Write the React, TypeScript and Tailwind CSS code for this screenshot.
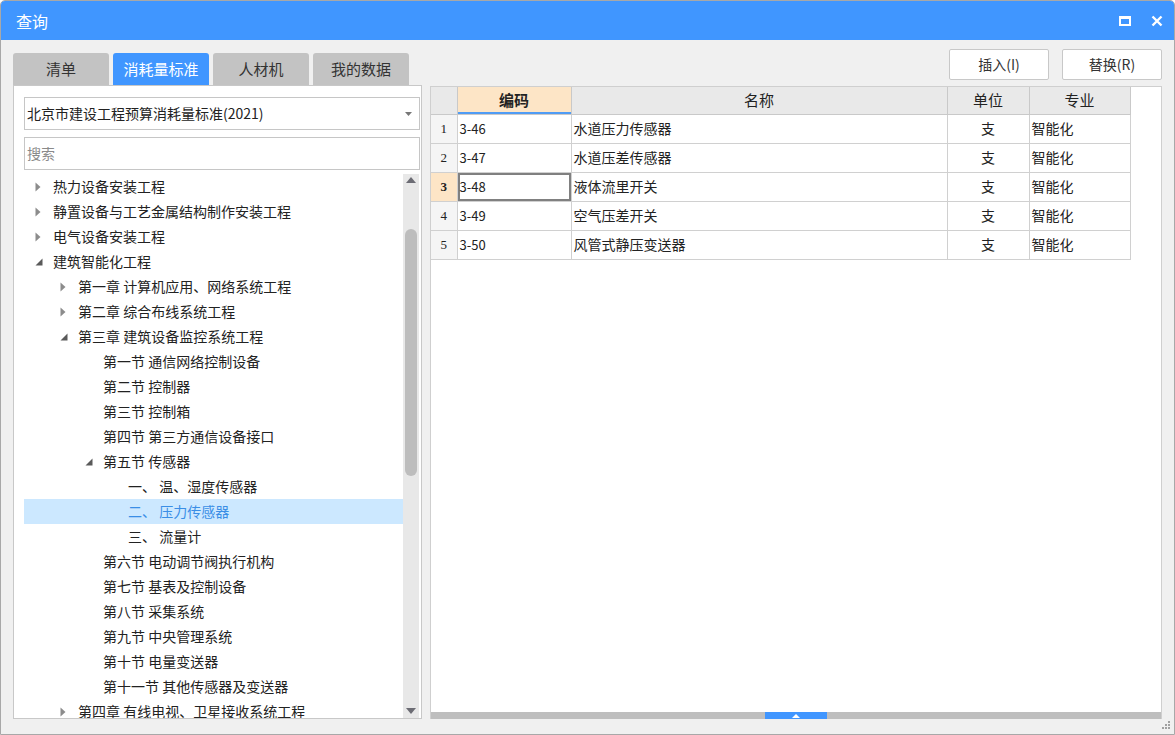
import React from 'react';

type Node = { text: string; level: number; state?: 'open' | 'closed'; selected?: boolean };

const tree: Node[] = [
  { text: '热力设备安装工程', level: 0, state: 'closed' },
  { text: '静置设备与工艺金属结构制作安装工程', level: 0, state: 'closed' },
  { text: '电气设备安装工程', level: 0, state: 'closed' },
  { text: '建筑智能化工程', level: 0, state: 'open' },
  { text: '第一章 计算机应用、网络系统工程', level: 1, state: 'closed' },
  { text: '第二章 综合布线系统工程', level: 1, state: 'closed' },
  { text: '第三章 建筑设备监控系统工程', level: 1, state: 'open' },
  { text: '第一节 通信网络控制设备', level: 2 },
  { text: '第二节 控制器', level: 2 },
  { text: '第三节 控制箱', level: 2 },
  { text: '第四节 第三方通信设备接口', level: 2 },
  { text: '第五节 传感器', level: 2, state: 'open' },
  { text: '一、 温、湿度传感器', level: 3 },
  { text: '二、 压力传感器', level: 3, selected: true },
  { text: '三、 流量计', level: 3 },
  { text: '第六节 电动调节阀执行机构', level: 2 },
  { text: '第七节 基表及控制设备', level: 2 },
  { text: '第八节 采集系统', level: 2 },
  { text: '第九节 中央管理系统', level: 2 },
  { text: '第十节 电量变送器', level: 2 },
  { text: '第十一节 其他传感器及变送器', level: 2 },
  { text: '第四章 有线电视、卫星接收系统工程', level: 1, state: 'closed' },
];

const rows = [
  { code: '3-46', name: '水道压力传感器' },
  { code: '3-47', name: '水道压差传感器' },
  { code: '3-48', name: '液体流里开关' },
  { code: '3-49', name: '空气压差开关' },
  { code: '3-50', name: '风管式静压变送器' },
];

const tabs = ['清单', '消耗量标准', '人材机', '我的数据'];

function Arrow({ state }: { state?: 'open' | 'closed' }) {
  if (state === 'closed')
    return (
      <svg width="6" height="10" viewBox="0 0 6 10">
        <path d="M0.5 0.5 L5.5 5 L0.5 9.5 Z" fill="#8c8c8c" />
      </svg>
    );
  if (state === 'open')
    return (
      <svg width="8" height="8" viewBox="0 0 8 8">
        <path d="M7.5 0.5 L7.5 7.5 L0.5 7.5 Z" fill="#5a5a5a" />
      </svg>
    );
  return null;
}

export default function App() {
  return (
    <div className="w-[1175px] h-[735px] flex flex-col bg-[#f0f0f0] border border-[#a8a8a8] rounded-t-[5px] overflow-hidden font-['Noto_Sans_CJK_SC','Noto_Sans',sans-serif] text-[#222]">
      {/* title bar */}
      <div className="h-[39px] shrink-0 bg-[#4096ff] flex items-center justify-between pl-[15px] pr-[11px]">
        <span className="text-white text-[16px]">查询</span>
        <div className="flex items-center gap-[20px]">
          <div className="w-[12px] h-[10px] border-2 border-t-[3px] border-white" />
          <svg width="12" height="12" viewBox="0 0 12 12">
            <path d="M1.5 1.5 L10.5 10.5 M10.5 1.5 L1.5 10.5" stroke="white" strokeWidth="2.4" />
          </svg>
        </div>
      </div>

      {/* body */}
      <div className="flex-1 flex pl-[12px] pr-[12px] pt-[9px] pb-[15px] min-h-0">
        {/* left column */}
        <div className="w-[409px] flex flex-col mt-[4px]">
          <div className="h-[32px] flex gap-[4px]">
            {tabs.map((t, i) => (
              <div
                key={t}
                className={
                  i === 1
                    ? 'w-[96px] rounded-t-[3px] bg-[#4096ff] text-white text-[15px] flex items-center justify-center'
                    : 'w-[96px] rounded-t-[3px] bg-[#c3c3c3] text-[#333] text-[15px] flex items-center justify-center'
                }
              >
                {t}
              </div>
            ))}
          </div>
          <div className="flex-1 flex flex-col bg-white border border-[#c8c8c8] pl-[10px] pr-[1px] pt-[11px] min-h-0">
            <div className="h-[33px] border border-[#c6c6c6] flex items-center justify-between pl-[2px] pr-[7px] text-[14px]">
              <span>北京市建设工程预算消耗量标准(2021)</span>
              <svg width="7" height="4" viewBox="0 0 7 4">
                <path d="M0 0 L7 0 L3.5 4 Z" fill="#777" />
              </svg>
            </div>
            <div className="h-[33px] mt-[7px] border border-[#c6c6c6] flex items-center pl-[2px] text-[14px] text-[#8a8a8a]">
              搜索
            </div>
            <div className="flex-1 flex mt-[4px] min-h-0">
              <div className="flex-1 overflow-hidden">
                {tree.map((n, i) => (
                  <div
                    key={i}
                    className={
                      n.selected
                        ? 'h-[25px] flex items-center bg-[#cce8ff] text-[#3a8ee6] text-[14px] whitespace-nowrap'
                        : 'h-[25px] flex items-center text-[14px] whitespace-nowrap'
                    }
                    style={{ paddingLeft: 8 + n.level * 25 }}
                  >
                    <div className="w-[21px] flex items-center pl-[3px]">
                      <Arrow state={n.state} />
                    </div>
                    <span>{n.text}</span>
                  </div>
                ))}
              </div>
              <div className="w-[16px] bg-[#e8e8e8] flex flex-col items-center mr-[1px]">
                <svg width="10" height="6" viewBox="0 0 10 6" className="mt-[3px]">
                  <path d="M0 6 L5 0 L10 6 Z" fill="#6c6c74" />
                </svg>
                <div className="w-[12px] h-[247px] mt-[46px] rounded-t-[6px] rounded-b-[6px] bg-[#bdbdbd]" />
                <div className="flex-1" />
                <svg width="10" height="6" viewBox="0 0 10 6" className="mb-[4px]">
                  <path d="M0 0 L10 0 L5 6 Z" fill="#6c6c74" />
                </svg>
              </div>
            </div>
          </div>
        </div>

        {/* right column */}
        <div className="flex-1 flex flex-col ml-[8px]">
          <div className="h-[31px] flex justify-end gap-[13px]">
            <button className="w-[100px] h-[31px] bg-white border border-[#c8c8c8] rounded-[2px] text-[14px] text-[#333]">
              插入(I)
            </button>
            <button className="w-[100px] h-[31px] bg-white border border-[#c8c8c8] rounded-[2px] text-[14px] text-[#333]">
              替换(R)
            </button>
          </div>
          <div className="flex-1 mt-[6px] bg-white border-l border-t border-r border-[#cfcfcf] flex flex-col">
            <div className="flex-1">
              <table className="table-fixed border-collapse text-[14px]">
                <colgroup>
                  <col className="w-[26px]" />
                  <col className="w-[114px]" />
                  <col className="w-[376px]" />
                  <col className="w-[82px]" />
                  <col className="w-[101px]" />
                </colgroup>
                <thead>
                  <tr className="h-[27px] bg-[#e9e9e9] text-[15px] font-bold">
                    <th className="border border-[#c9c9c9] border-t-0 border-l-0" />
                    <th className="border border-[#c9c9c9] border-t-0 bg-[#fde5c6] shadow-[inset_0_-2px_0_#4f9cf5]">编码</th>
                    <th className="border border-[#c9c9c9] border-t-0 font-normal">名称</th>
                    <th className="border border-[#c9c9c9] border-t-0 font-normal">单位</th>
                    <th className="border border-[#c9c9c9] border-t-0 font-normal">专业</th>
                  </tr>
                </thead>
                <tbody>
                  {rows.map((r, i) => (
                    <tr key={r.code} className="h-[29px]">
                      <td
                        className={
                          i === 2
                            ? 'border border-[#d0d0d0] border-l-0 bg-[#fde5c6] text-center font-bold text-[13px] font-["Liberation_Serif",serif]'
                            : 'border border-[#d0d0d0] border-l-0 bg-[#f5f5f5] text-center text-[13px] font-["Liberation_Serif",serif]'
                        }
                      >
                        {i + 1}
                      </td>
                      <td
                        className={
                          i === 2
                            ? 'border border-[#d0d0d0] pl-[2px] text-[13px] shadow-[inset_0_0_0_2px_#808080,inset_2px_0_0_#4f9cf5]'
                            : 'border border-[#d0d0d0] pl-[2px] text-[13px]'
                        }
                      >
                        {r.code}
                      </td>
                      <td className="border border-[#d0d0d0] pl-[2px]">{r.name}</td>
                      <td className="border border-[#d0d0d0] text-center">支</td>
                      <td className="border border-[#d0d0d0] pl-[2px]">智能化</td>
                    </tr>
                  ))}
                </tbody>
              </table>
            </div>
            <div className="h-[7px] bg-[#bebebe] flex">
              <div className="w-[334px]" />
              <div className="w-[62px] bg-[#4096ff] flex items-center justify-center">
                <svg width="8" height="4" viewBox="0 0 8 4">
                  <path d="M0 4 L4 0 L8 4 Z" fill="white" />
                </svg>
              </div>
            </div>
          </div>
        </div>
      </div>
      <div className="relative h-0">
        <svg width="10" height="10" viewBox="0 0 10 10" className="absolute right-[3px] bottom-[4px]">
          <rect x="7" y="1" width="2" height="2" fill="#a0a0a0" />
          <rect x="4" y="4" width="2" height="2" fill="#a0a0a0" />
          <rect x="7" y="4" width="2" height="2" fill="#a0a0a0" />
          <rect x="1" y="7" width="2" height="2" fill="#a0a0a0" />
          <rect x="4" y="7" width="2" height="2" fill="#a0a0a0" />
          <rect x="7" y="7" width="2" height="2" fill="#a0a0a0" />
        </svg>
      </div>
    </div>
  );
}
